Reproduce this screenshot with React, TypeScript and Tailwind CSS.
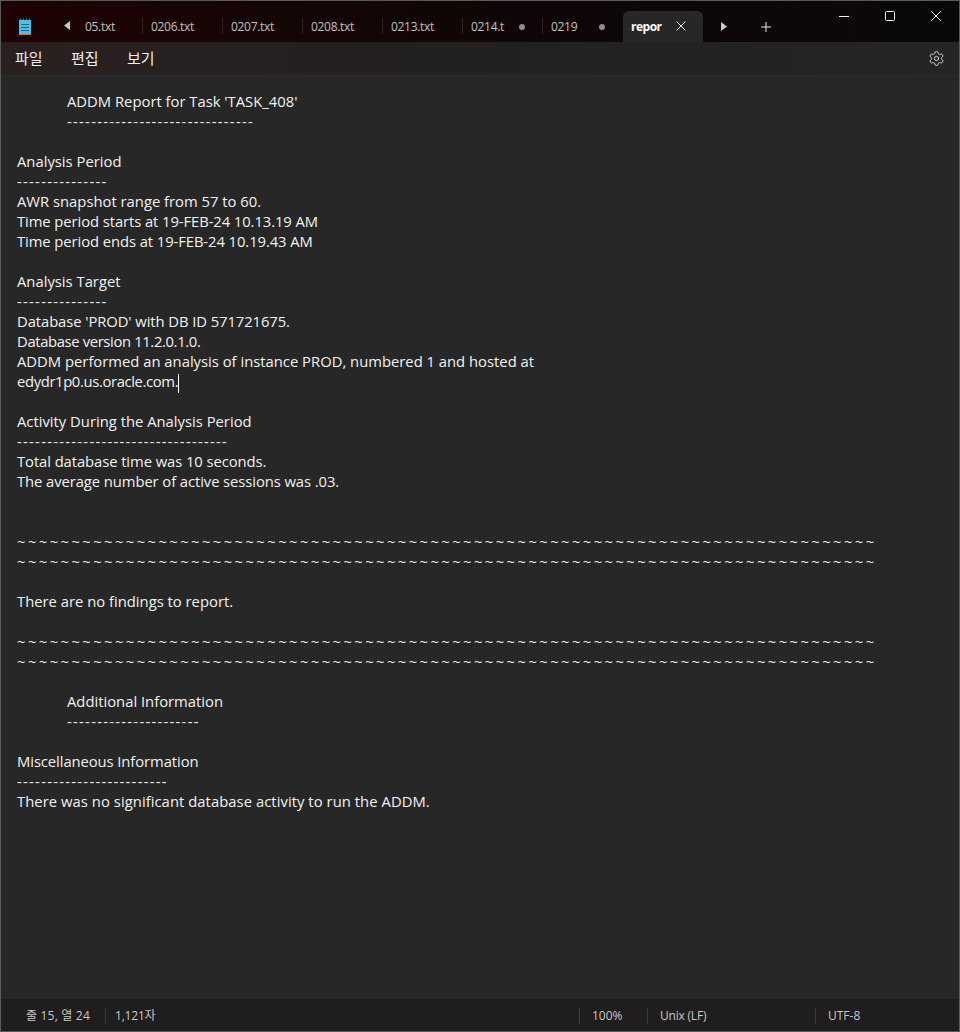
import React from 'react';
import { Settings } from 'lucide-react';

const tabs = [
  { name: '05.txt', width: 'w-[63px]', pad: 'pl-[6px]', sep: false },
  { name: '0206.txt', width: 'w-[80px]', pad: 'pl-[9px]', sep: true },
  { name: '0207.txt', width: 'w-[80px]', pad: 'pl-[9px]', sep: true },
  { name: '0208.txt', width: 'w-[80px]', pad: 'pl-[9px]', sep: true },
  { name: '0213.txt', width: 'w-[80px]', pad: 'pl-[9px]', sep: true },
];

const dashes = (n: number) => '-'.repeat(n);
const tildes = '~'.repeat(79);

const reportLines = [
  "\tADDM Report for Task 'TASK_408'",
  '\t' + dashes(31),
  '',
  'Analysis Period',
  dashes(15),
  'AWR snapshot range from 57 to 60.',
  'Time period starts at 19-FEB-24 10.13.19 AM',
  'Time period ends at 19-FEB-24 10.19.43 AM',
  '',
  'Analysis Target',
  dashes(15),
  "Database 'PROD' with DB ID 571721675.",
  'Database version 11.2.0.1.0.',
  'ADDM performed an analysis of instance PROD, numbered 1 and hosted at',
  'edydr1p0.us.oracle.com.',
  '',
  'Activity During the Analysis Period',
  dashes(35),
  'Total database time was 10 seconds.',
  'The average number of active sessions was .03.',
  '',
  '',
  tildes,
  tildes,
  '',
  'There are no findings to report.',
  '',
  tildes,
  tildes,
  '',
  '\tAdditional Information',
  '\t' + dashes(22),
  '',
  'Miscellaneous Information',
  dashes(25),
  'There was no significant database activity to run the ADDM.',
];

// 글꼴 폭 차이 보정
const tightLines = [6, 7, 11, 18, 19, 33];
const tighterLines = [12, 14];

function lineSpacing(text: string, i: number) {
  if (/^-+$/.test(text)) return 'tracking-[1.27px]';
  if (/^~+$/.test(text)) return 'tracking-[2.42px]';
  if (tighterLines.includes(i)) return 'tracking-[-0.36px]';
  if (tightLines.includes(i)) return 'tracking-[-0.08px]';
  if (i === 35) return 'tracking-[0.05px]';
  return '';
}

function NotepadIcon() {
  return (
    <svg width="14" height="18" viewBox="0 0 14 18">
      <rect x="1" y="2" width="12" height="15" fill="#52bde2" />
      <rect x="1" y="16" width="12" height="1" fill="#c9793a" />
      <path d="M2.500 2V0.500M5.500 2V0.500M8.500 2V0.500M11.500 2V0.500" stroke="#1c7ea3" strokeWidth="1.200" />
      <path d="M3 6.500H11M3 9.500H11M3 12.500H11" stroke="#11698c" strokeWidth="1" />
    </svg>
  );
}

function Tab({ name, width, pad, sep }: { name: string; width: string; pad: string; sep: boolean }) {
  return (
    <div className={`${width} h-[31px] flex items-center pt-[1px] ${pad} relative`}>
      {sep && <div className="absolute left-0 top-[7px] h-[16px] w-px bg-[#2c2626]" />}
      <span className="text-[12px] tracking-[-0.3px] text-[#c4c0c0]">{name}</span>
    </div>
  );
}

function DirtyTab({ name }: { name: string }) {
  return (
    <div className="w-[80px] h-[31px] flex items-center pt-[1px] pl-[9px] relative">
      <div className="absolute left-0 top-[7px] h-[16px] w-px bg-[#2c2626]" />
      <span className="text-[12px] tracking-[-0.3px] text-[#c4c0c0] whitespace-nowrap">{name}</span>
      <div className="absolute left-[57px] top-[13px] w-[6px] h-[6px] rounded-full bg-[#8f8c8c]" />
    </div>
  );
}

export default function App() {
  return (
    <div className="w-[960px] h-[1032px] flex flex-col bg-[#272727] border border-[#5a5a5a] overflow-hidden font-['Open_Sans','Noto_Sans_CJK_KR',sans-serif]">
      {/* 제목 표시줄 */}
      <div className="h-[41px] flex shrink-0 bg-gradient-to-r from-[#1e0304] via-[#0f0606] to-[#0a0908]">
        <div className="w-[48px] flex items-center justify-center pt-[10px] pr-[1px]">
          <NotepadIcon />
        </div>
        <div className="w-[30px] flex items-end pb-[11px] pl-[14px]">
          <svg width="8" height="10" viewBox="0 0 8 10" className="shrink-0"><path d="M7 0V9L1 4.500Z" fill="#c8c8c8" /></svg>
        </div>
        <div className="flex items-end">
          {tabs.map((t) => <Tab key={t.name} {...t} />)}
          <DirtyTab name="0214.t" />
          <DirtyTab name="0219" />
        </div>
        <div className="flex items-end ml-[1px]">
          <div className="w-[80px] h-[31px] rounded-t-[6px] bg-[#272727] flex items-center pt-[1px] pl-[8px] relative">
            <span className="text-[12px] tracking-[-0.5px] font-bold text-white">repor</span>
            <svg width="12" height="12" viewBox="0 0 12 12" className="absolute left-[52px] top-[9px]"><path d="M1.500 1.500L10.500 10.500M10.500 1.500L1.500 10.500" stroke="#e8e8e8" strokeWidth="1" /></svg>
          </div>
          <div className="w-[42px] h-[31px] flex items-center justify-center">
            <svg width="8" height="10" viewBox="0 0 8 10"><path d="M1 0V9L7 4.500Z" fill="#c8c8c8" /></svg>
          </div>
          <div className="w-[42px] h-[31px] flex items-center justify-center">
            <svg width="12" height="12" viewBox="0 0 12 12"><path d="M6 1V11M1 6H11" stroke="#e8e8e8" strokeWidth="1" /></svg>
          </div>
        </div>
        <div className="ml-auto flex items-start pt-[9px]">
          <div className="w-[46px] flex justify-center"><svg width="12" height="12" viewBox="0 0 12 12"><path d="M1 6.500H11" stroke="#f0f0f0" strokeWidth="1" /></svg></div>
          <div className="w-[46px] flex justify-center"><svg width="12" height="12" viewBox="0 0 12 12"><rect x="1.500" y="1.500" width="9" height="9" rx="1" fill="none" stroke="#f0f0f0" strokeWidth="1" /></svg></div>
          <div className="w-[46px] flex justify-center"><svg width="12" height="12" viewBox="0 0 12 12"><path d="M1 1L11 11M11 1L1 11" stroke="#f0f0f0" strokeWidth="1" /></svg></div>
        </div>
      </div>
      {/* 메뉴 */}
      <div className="h-[33px] shrink-0 flex items-center bg-gradient-to-r from-[#2a2020] via-[#222020] to-[#252525] pl-[14px] pr-[14px] text-[15px] text-[#f0eeee]">
        <span className="w-[56px]">파일</span>
        <span className="w-[56px]">편집</span>
        <span>보기</span>
        <Settings size={17} strokeWidth={1.25} className="ml-auto text-[#e4e4e4]" />
      </div>
      {/* 편집 영역 */}
      <div className="flex-1 pt-[15px] pl-[16px] border-t border-[#2b2b2b] text-[14.8px] leading-[20px] text-[#f2f2f2] whitespace-pre">
        {reportLines.map((line, i) => {
          const text = line.replace('\t', '');
          return (
            <div key={i} className="h-[20px]">
              <span className={`${line.startsWith('\t') ? 'pl-[50px]' : ''} ${lineSpacing(text, i)}`}>{text}</span>
              {i === 14 && <span className="inline-block w-px h-[19px] bg-white align-middle" />}
            </div>
          );
        })}
      </div>
      {/* 상태 표시줄 */}
      <div className="h-[32px] shrink-0 flex items-center bg-[#1f1d1d] pt-[1px] text-[12px] text-[#c8c8c8]">
        <div className="w-[104px] pl-[25px] whitespace-nowrap tracking-[0.2px]">줄 15, 열 24</div>
        <div className="h-[16px] border-l border-[#3a3a3a] pl-[9px] leading-[16px] w-[474px] tracking-[-0.2px]">1,121자</div>
        <div className="h-[16px] border-l border-[#3a3a3a] pl-[12px] leading-[16px] w-[68px]">100%</div>
        <div className="h-[16px] border-l border-[#3a3a3a] pl-[12px] leading-[16px] w-[168px] tracking-[-0.2px]">Unix (LF)</div>
        <div className="h-[16px] border-l border-[#3a3a3a] pl-[12px] leading-[16px]">UTF-8</div>
      </div>
    </div>
  );
}
